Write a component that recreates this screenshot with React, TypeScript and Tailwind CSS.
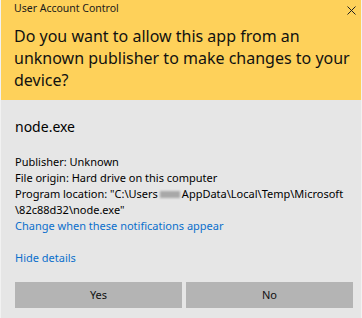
export default function App() {
  return (
    <div className="w-[362px] h-[318px] bg-[#e6e6e6] border-x border-[#f2f2f2] flex flex-col font-['Noto_Sans',sans-serif] text-black overflow-hidden">
      <div className="h-[100px] shrink-0 bg-[#fed15a] px-[13px] relative">
        <div className="text-[10.5px] leading-[14px] pt-[1px] text-[#1a1a1a]">User Account Control</div>
        <svg className="absolute right-[5px] top-[6px] w-[9px] h-[9px]" viewBox="0 0 9 9" fill="none">
          <path d="M0.5 0.5L8.5 8.5M8.5 0.5L0.5 8.5" stroke="#222" strokeWidth="1" />
        </svg>
        <h1 className="text-[16px] leading-[22px] mt-[9.5px] text-[#111] whitespace-nowrap">
          Do you want to allow this app from an
          <br />
          unknown publisher to make changes to your
          <br />
          device?
        </h1>
      </div>
      <div className="flex-1 pl-[14px] pr-[8px] pt-[16.5px]">
        <div className="text-[14px] leading-[20px]">node.exe</div>
        <div className="mt-[17px] text-[11px] leading-[16px] whitespace-nowrap">
          <div>Publisher: Unknown</div>
          <div>File origin: Hard drive on this computer</div>
          <div>
            Program location: "C:\Users
            <span className="inline-block align-middle w-[20px] h-[7px] bg-[#a8a8a8] blur-[1px] mx-[2px]" />
            AppData\Local\Temp\Microsoft
          </div>
          <div>\82c88d32\node.exe"</div>
          <div className="text-[#0a6fcc]">Change when these notifications appear</div>
        </div>
        <div className="mt-[16px] text-[11px] leading-[16px] text-[#0a6fcc]">Hide details</div>
        <div className="mt-[16.3px] grid grid-cols-2 gap-[4px]">
          <button className="h-[26px] bg-[#b4b4b4] text-[11px] text-[#111]">Yes</button>
          <button className="h-[26px] bg-[#b4b4b4] text-[11px] text-[#111]">No</button>
        </div>
      </div>
    </div>
  );
}
